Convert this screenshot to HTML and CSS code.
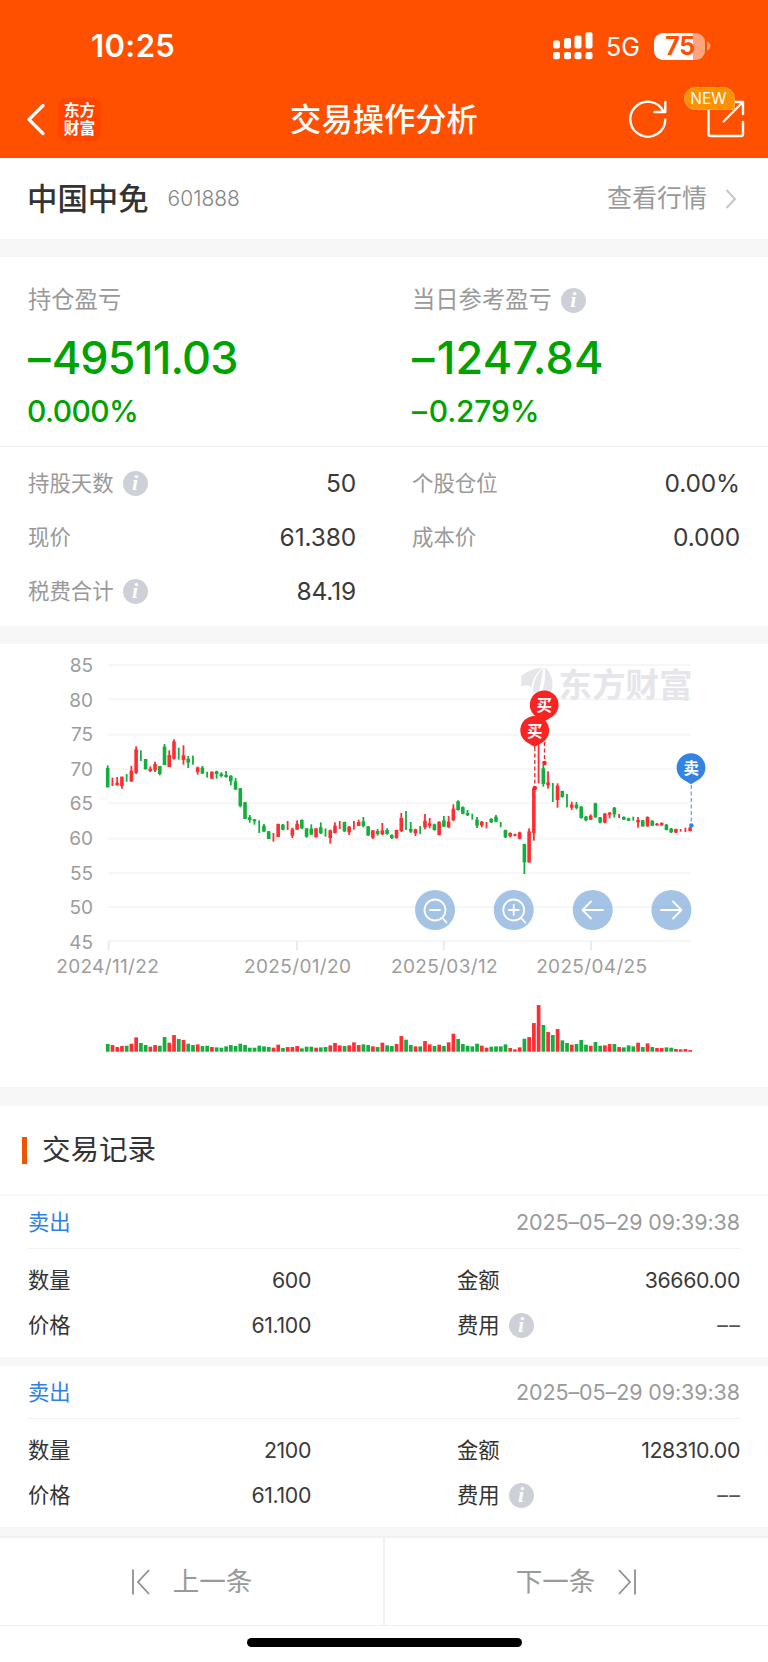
FILE: index.html
```html
<!DOCTYPE html>
<html lang="zh-CN">
<head>
<meta charset="utf-8">
<title>交易操作分析</title>
<link rel="stylesheet" href="styles.css">
</head>
<body>
<header class="header">
  <div class="status">
    <span class="clock">10:25</span>
    <svg class="signal" width="40" height="28" viewBox="0 0 40 28" fill="#fff">
      <rect x="0" y="8.500" width="7" height="8" rx="2"/><rect x="11" y="6" width="7" height="10.500" rx="2"/>
      <rect x="21.500" y="3.500" width="7" height="13" rx="2"/><rect x="32.500" y="0.300" width="7" height="16.200" rx="2"/>
      <rect x="0" y="20" width="7" height="7.300" rx="2"/><rect x="11" y="20" width="7" height="7.300" rx="2"/>
      <rect x="21.500" y="20" width="7" height="7.300" rx="2"/><rect x="32.500" y="20" width="7" height="7.300" rx="2"/>
    </svg>
    <span class="network">5G</span>
    <span class="battery"><span class="battery-level">75</span></span>
    <svg class="battery-tip" width="4" height="10" viewBox="0 0 4 10"><path d="M0 0.500C4.500 1.500 4.500 8.500 0 9.500Z" fill="#ff9d73"/></svg>
  </div>
  <nav class="nav">
    <svg class="back" width="20" height="34" viewBox="0 0 20 34" fill="none" stroke="#fff" stroke-width="3.200" stroke-linecap="round" stroke-linejoin="round"><path d="M17 3.500L3 17.500L17 31.500"/></svg>
    <div class="brand"><span>东方</span><span>财富</span></div>
    <h1 class="nav-title">交易操作分析</h1>
    <svg class="refresh" width="40" height="40" viewBox="0 0 40 40" fill="none" stroke="#fff" stroke-width="2.400" stroke-linecap="round" stroke-linejoin="round"><path d="M37.300 20.500A17.500 17.500 0 1 1 35.500 12.500M37.300 3V13H26.500"/></svg>
    <div class="share">
      <svg width="40" height="40" viewBox="0 0 40 40" fill="none" stroke="#fff" stroke-width="2.400" stroke-linecap="round" stroke-linejoin="round"><path d="M2.500 9V35Q2.500 37 4.500 37H35Q37 37 37 35V23M17.500 22.500L36.500 3.500M25 3H37V15"/></svg>
      <span class="badge">NEW</span>
    </div>
  </nav>
</header>

<section class="stock">
  <span class="stock-name">中国中免</span>
  <span class="stock-code">601888</span>
  <a class="quote-link">查看行情
    <svg width="12" height="22" viewBox="0 0 12 22" fill="none" stroke="#c6c6c6" stroke-width="2"><path d="M1.500 2L10 11L1.500 20"/></svg>
  </a>
</section>

<section class="summary">
  <div class="profit">
    <div class="profit-cell">
      <div class="profit-label">持仓盈亏</div>
      <div class="profit-value tight"><span class="dash">–</span>49511.03</div>
      <div class="profit-rate tight">0.000%</div>
    </div>
    <div class="profit-cell">
      <div class="profit-label">当日参考盈亏<i class="info">i</i></div>
      <div class="profit-value"><span class="dash">–</span>1247.84</div>
      <div class="profit-rate"><span class="dash">–</span>0.279%</div>
    </div>
  </div>
  <div class="facts">
    <div class="fact"><span class="fact-label">持股天数<i class="info">i</i></span><span class="fact-value">50</span></div>
    <div class="fact"><span class="fact-label">个股仓位</span><span class="fact-value">0.00%</span></div>
    <div class="fact"><span class="fact-label">现价</span><span class="fact-value">61.380</span></div>
    <div class="fact"><span class="fact-label">成本价</span><span class="fact-value">0.000</span></div>
    <div class="fact"><span class="fact-label">税费合计<i class="info">i</i></span><span class="fact-value">84.19</span></div>
  </div>
</section>

<section class="chart">
  <svg id="chart" width="768" height="443" viewBox="0 644 768 443">
    <path class="grid" d="M108 665H691M108 699.300H691M108 734.800H691M108 768.800H691M108 803.200H691M108 838.800H691M108 873H691M108 907H691M108 941.300H691"/>
    <path class="tick" d="M108.700 941V950.500M297 941V950.500M443.800 941V950.500M591 941V950.500"/>
    <g class="watermark">
      <path d="M521 676.500C528 670 536 668.500 542.500 667.500C536 673 532.500 680 531.500 688C529.500 684.500 525 684.500 521.500 686.500Z"/>
      <path d="M533 691C533 682 537 674 543.500 668C541.500 676 541 686 537.500 698C536 694 534.500 692 533 691Z"/>
      <path d="M545 667.500C553 673 555 688 549 696L545 700H538.500C543.500 690 546 680 545 667.500Z"/>
      <text x="558.500" y="697">东方财富</text>
    </g>
    <g class="y-axis">
      <text x="93" y="672">85</text><text x="93" y="706.500">80</text><text x="93" y="741">75</text>
      <text x="93" y="775.500">70</text><text x="93" y="810">65</text><text x="93" y="845">60</text>
      <text x="93" y="879.500">55</text><text x="93" y="914">50</text><text x="93" y="948.500">45</text>
    </g>
    <g class="x-axis">
      <text x="107.700" y="973">2024/11/22</text><text x="297.700" y="973">2025/01/20</text>
      <text x="444.500" y="973">2025/03/12</text><text x="591.800" y="973">2025/04/25</text>
    </g>
    <g id="candles"></g>
    <g id="volumes"></g>
    <g class="buy">
      <path class="lead" d="M544.500 742V763"/><circle cx="544.500" cy="763" r="2.300"/>
      <path class="pin" d="M544.200 721.500L535.500 716.300A14.400 14.400 0 1 1 552.900 716.300Z"/><text x="544.200" y="711">买</text>
      <path class="lead" d="M534.800 747V788"/><circle cx="534.800" cy="788" r="2.300"/>
      <path class="pin" d="M534.700 747L526 741.800A14.400 14.400 0 1 1 543.400 741.800Z"/><text x="534.700" y="736.500">买</text>
    </g>
    <g class="sell">
      <path class="lead" d="M691.300 785V825"/><circle cx="691.300" cy="825.500" r="2.300"/>
      <path class="pin" d="M691 784.300L682.300 779.100A14.400 14.400 0 1 1 699.700 779.100Z"/><text x="691.300" y="774">卖</text>
    </g>
    <g class="tool">
      <circle class="tool-bg" cx="435" cy="910" r="20"/><circle cx="435" cy="910" r="10.500"/><path d="M430 910H440M442.500 918L446.500 922.500"/>
      <circle class="tool-bg" cx="513.700" cy="910" r="20"/><circle cx="513.700" cy="910" r="10.500"/><path d="M508.700 910H518.700M513.700 905V915M521.200 918L525.200 922.500"/>
      <circle class="tool-bg" cx="592.700" cy="910" r="20"/><path d="M603 910H582.500M591 901.500L582.500 910L591 918.500"/>
      <circle class="tool-bg" cx="671.400" cy="910" r="20"/><path d="M661 910H681.500M673 901.500L681.500 910L673 918.500"/>
    </g>
  </svg>
</section>

<section class="records">
  <h2 class="records-title">交易记录</h2>
  <article class="record">
    <div class="record-head"><span class="side">卖出</span><time>2025–05–29 09:39:38</time></div>
    <div class="record-body">
      <div class="item"><span class="key">数量</span><span>600</span></div>
      <div class="item"><span class="key">金额</span><span>36660.00</span></div>
      <div class="item"><span class="key">价格</span><span>61.100</span></div>
      <div class="item"><span class="key">费用<i class="info">i</i></span><span class="empty">––</span></div>
    </div>
  </article>
  <article class="record">
    <div class="record-head"><span class="side">卖出</span><time>2025–05–29 09:39:38</time></div>
    <div class="record-body">
      <div class="item"><span class="key">数量</span><span>2100</span></div>
      <div class="item"><span class="key">金额</span><span>128310.00</span></div>
      <div class="item"><span class="key">价格</span><span>61.100</span></div>
      <div class="item"><span class="key">费用<i class="info">i</i></span><span class="empty">––</span></div>
    </div>
  </article>
</section>

<footer class="pager">
  <a class="page prev"><svg width="20" height="28" viewBox="0 0 20 28"><path d="M2 1.500V26.500M18 2L7 14L18 26"/></svg>上一条</a>
  <a class="page next">下一条<svg width="20" height="28" viewBox="0 0 20 28"><path d="M18 1.500V26.500M2 2L13 14L2 26"/></svg></a>
</footer>
<div class="home"><span class="home-bar"></span></div>
<script src="chart.js"></script>
</body>
</html>
```

FILE: styles.css
```css
* { box-sizing: border-box; }
body {
  margin: 0;
  width: 768px;
  background: #fff;
  color: #333;
  font-family: Inter, "Noto Sans CJK SC", sans-serif;
  line-height: 1.4;
}
h1, h2 { margin: 0; font-weight: 400; }
svg { display: block; flex: none; }

.header { height: 158px; background: #ff5000; color: #fff; }
.status { display: flex; align-items: center; height: 80px; padding: 12px 0 0 91px; }
.clock { width: 462px; font-size: 31px; font-weight: 600; line-height: 40px; letter-spacing: 0.400px; }
.network { margin-left: 13px; width: 48px; font-size: 25px; line-height: 32px; padding-top: 2px; }
.battery {
  width: 51px; height: 27px; border-radius: 9px;
  background: linear-gradient(to right, #fff 39px, #ffa47d 39px);
}
.battery-level {
  display: block; text-align: center; padding-left: 1px;
  font-size: 25px; font-weight: 700; line-height: 27px; color: #ff5000; letter-spacing: -0.500px;
}
.battery-tip { margin-left: 2px; }
.nav { display: flex; align-items: center; height: 78px; }
.back { margin-left: 26px; }
.brand {
  display: flex; flex-direction: column; align-items: center; justify-content: center;
  width: 43px; height: 43px; margin-left: 12px; padding-top: 2px; border-radius: 8px; background: #ff4400;
  font-size: 15.800px; font-weight: 700; line-height: 18px;
}
.nav-title { width: 566px; text-align: center; font-size: 31.300px; font-weight: 500; line-height: 40px; margin-right: -39px; padding-top: 1px; }
.refresh { flex: none; }
.share { position: relative; margin-left: 38px; }
.badge {
  position: absolute; left: -22px; top: -12px; width: 51px; height: 23px;
  border: 1px solid #ffa544; border-radius: 12px 12px 2px 12px; background: #ff9000;
  font-size: 15.500px; line-height: 22px; text-align: center; padding-right: 2px;
}

.stock { display: flex; align-items: center; height: 81px; padding: 0 31px 0 28px; }
.stock-name { margin-left: -1px; font-size: 30.400px; font-weight: 500; line-height: 40px; color: #333; }
.stock-code { margin-left: 19px; font-size: 21px; font-weight: 300; color: #858585; }
.quote-link { display: flex; align-items: center; gap: 18px; margin-left: auto; font-size: 25px; color: #999; }

.summary { border-top: 18px solid #f7f7f7; height: 387px; }
.profit { display: grid; grid-template-columns: 1fr 1fr; height: 190px; border-bottom: 1px solid #f0f0f0; }
.profit-cell { padding: 27px 28px 0; }
.profit-label { display: flex; align-items: center; height: 32px; padding-top: 1px; font-size: 23.300px; color: #999; }
.profit-value { margin-top: 16px; height: 52px; font-size: 45px; line-height: 52px; font-weight: 500; color: #00a200; letter-spacing: 0.200px; }
.profit-value.tight { letter-spacing: -0.850px; }
.profit-rate { margin-top: 7px; height: 40px; font-size: 30px; line-height: 40px; font-weight: 500; color: #00a200; letter-spacing: -0.200px; }
.profit-rate.tight { margin-left: -1px; letter-spacing: -0.600px; }
.dash { margin-right: 2px; }
.info {
  width: 25px; height: 25px; margin-left: 9px; border-radius: 50%; background: #cdd0d6;
  font: italic 700 22px/24px "Liberation Serif", serif; color: #fff; text-align: center;
}
.facts { display: grid; grid-template-columns: 1fr 1fr; grid-auto-rows: 54px; padding-top: 9px; }
.fact { display: flex; align-items: center; justify-content: space-between; padding: 0 28px; }
.fact-label { display: flex; align-items: center; padding-top: 1px; font-size: 21.400px; color: #999; }
.fact-value { font-size: 24.500px; line-height: 32px; color: #3a3a3a; letter-spacing: -0.150px; }

.chart { border-top: 18px solid #f7f7f7; }
.grid { stroke: #f6f6f6; stroke-width: 2; fill: none; }
.tick { stroke: #ececec; stroke-width: 2; }
.watermark { fill: #e6e6ea; }
.watermark text { font: 700 33.500px "Noto Sans CJK SC", sans-serif; }
.y-axis, .x-axis { font-size: 19px; fill: #9c9c9c; }
.y-axis { text-anchor: end; }
.x-axis { text-anchor: middle; letter-spacing: 0.350px; }
.up { fill: #ff2d32; }
.down { fill: #13ae3b; }
.lead { fill: none; stroke-width: 1.300; stroke-dasharray: 4 2.500; }
.buy { fill: #f82323; }
.buy .lead { stroke: #f82323; }
.buy .pin { fill: #f82323; }
.sell { fill: #3383e4; }
.sell .lead { stroke: #6fa5e8; }
.buy text, .sell text { fill: #fff; font: 700 15.500px "Noto Sans CJK SC", sans-serif; text-anchor: middle; }
.tool { fill: none; stroke: #fff; stroke-width: 1.800; stroke-linecap: round; stroke-linejoin: round; }
.tool .tool-bg { fill: #8fb4de; fill-opacity: 0.800; stroke: none; }

.records { border-top: 19px solid #f7f7f7; }
.records-title {
  display: flex; align-items: center; height: 90px; padding-left: 22px;
  font-size: 28.500px; color: #333; border-bottom: 2px solid #f7f7f7;
}
.records-title::before { content: ""; width: 5px; height: 27px; margin-right: 15px; background: #ee5500; }
.record { height: 170px; padding: 0 28px; border-bottom: 9px solid #f7f7f7; }
.record-head {
  display: flex; align-items: center; justify-content: space-between;
  height: 53px; border-bottom: 1px solid #f2f2f2; font-size: 21.300px;
}
.side { padding-top: 1px; color: #2f80e5; }
.record-head time { color: #9a9a9a; font-size: 21.500px; letter-spacing: -0.100px; }
.record-body { display: grid; grid-template-columns: 283px 283px; grid-auto-rows: 45px; justify-content: space-between; padding-top: 9px; }
.item { display: flex; align-items: center; justify-content: space-between; font-size: 21.300px; color: #3a3a3a; letter-spacing: -0.350px; }
.key { display: flex; align-items: center; color: #333; letter-spacing: 0; }
.empty { color: #555; letter-spacing: 1.500px; margin-right: -1.500px; }

.pager { display: flex; height: 90px; border-top: 2px solid #f0f0f0; border-bottom: 1px solid #f0f0f0; }
.page { display: flex; flex: 1; align-items: center; justify-content: center; gap: 22px; font-size: 26.500px; color: #999; }
.next { border-left: 2px solid #f0f0f0; }
.page svg path { fill: none; stroke: #8f8f8f; stroke-width: 1.800; }
.home { display: flex; justify-content: center; padding-top: 12px; height: 36px; }
.home-bar { width: 275px; height: 9px; border-radius: 5px; background: #000; }
```

FILE: chart.js
```js
// Each entry: direction, then high / body top / body bottom / low; entries with two values are plain wicks.
// Values are offsets in thirds of a pixel below the top edge of the plot.
const candles = `
d376,384,442,442 u413,438 u411,428,436,436 u410,410,438,446 d402,425 u378,392,424,426 u319,328,398,402 d331,363 d357,357,388,388 u379,386,393,396
u365,372,391,396 d378,378,402,406 d312,320,375,375 u331,345,381,381 u298,304,356,359 d323,359 u316,346,360,374 d348,356,368,384 d347,374 u380,382,396,404
d378,383,401,401 d395,413 u395,395,416,416 d392,394,402,416 d397,401,408,412 d393,405,411,413 d406,407,424,436 d414,424,449,449 d444,445,498,502 d486,487,537,537
d525,532,540,548 d537,538,544,554 d541,579 d552,557,575,575 d573,574,597,597 u579,605 u551,552,591,591 d552,554,569,571 u543,570 u563,568,587,594
u541,551,569,569 d538,540,565,567 d565,565,590,593 d553,566,584,584 u565,565,592,592 d547,562,580,582 d565,590 u569,571,594,611 u547,557,579,580 u543,567
d545,546,574,576 u558,560,577,585 u543,569 u539,546,558,558 d531,544,558,562 d558,559,586,588 u570,571,593,597 d567,573,582,587 u549,571,583,585 d565,570,582,584
d583,585,594,597 u569,570,594,596 u519,534,573,576 d513,570 d546,567,575,579 u566,568,580,588 d558,582 u522,542,562,568 u534,550,558,565 d551,553,570,572
u544,545,585,586 d528,541,560,561 u528,545,562,564 u493,506,541,543 d481,484,510,512 d499,501,521,523 d510,519,526,528 d521,539 d531,539,557,564 u543,545,556,562
u546,565 d534,537,547,549 d525,530,545,547 d546,562 d569,570,592,594 u577,579,589,592 u581,583,587,589 u575,577,596,598 d611,612,667,702 u565,574,667,668
u445,445,579,602 u312,430 d375,385,432,440 u394,427,436,446 d429,486 u430,437,480,503 d452,453,471,473 d462,502 u485,494,503,510 d486,494,504,508
d499,500,534,536 d528,530,541,544 u523,527,539,540 d488,490,532,533 d531,532,548,550 u519,521,548,550 u516,518,524,535 d501,503,523,533 u522,534 d529,531,539,540
d533,535,542,543 d530,542 u531,540,547,563 d540,541,559,560 u529,531,559,560 d541,542,557,558 u549,551,556,557 u547,549,556,557 d552,554,570,571 d564,566,577,579
u566,567,578,579 u567,575 u563,576 u561,563,573,574`.trim().split(/\s+/);

const volumes = [
  23, 20, 14, 17, 18, 24, 43, 26, 20, 15, 20, 18, 44, 27, 50, 38, 35, 24, 20, 22, 17, 18, 14, 13, 12, 16, 20, 17, 24, 20,
  12, 12, 18, 16, 14, 12, 21, 11, 14, 14, 17, 10, 15, 15, 12, 13, 14, 19, 26, 19, 17, 19, 28, 20, 22, 20, 16, 14, 27, 19,
  17, 23, 47, 36, 20, 16, 16, 32, 22, 17, 21, 17, 28, 54, 38, 23, 18, 16, 24, 18, 12, 15, 16, 16, 22, 11, 7, 13, 39, 44,
  86, 140, 80, 59, 50, 68, 34, 26, 21, 23, 35, 21, 18, 29, 18, 19, 23, 23, 14, 13, 19, 16, 27, 14, 25, 14, 11, 11, 13, 12,
  8, 7, 8, 5
];

const NS = 'http://www.w3.org/2000/svg';
function bar(parent, cls, x, y, w, h) {
  const r = document.createElementNS(NS, 'rect');
  Object.entries({ class: cls, x, y, width: w, height: h }).forEach(([k, v]) => r.setAttribute(k, v));
  parent.appendChild(r);
}

const candleLayer = document.getElementById('candles');
const volumeLayer = document.getElementById('volumes');
candles.forEach((c, i) => {
  const cls = c[0] === 'u' ? 'up' : 'down';
  const v = c.slice(1).split(',').map(n => 640 + n / 3);
  const x = 107.7 + i * 4.735;
  bar(candleLayer, cls, x - 0.9, v[0], 1.8, v[v.length - 1] - v[0]);
  if (v.length === 4) bar(candleLayer, cls, x - 1.8, v[1], 3.6, Math.max(1.2, v[2] - v[1]));
  const h = volumes[i] / 3;
  bar(volumeLayer, cls, x - 1.8, 1051.7 - h, 3.7, h);
});
```
